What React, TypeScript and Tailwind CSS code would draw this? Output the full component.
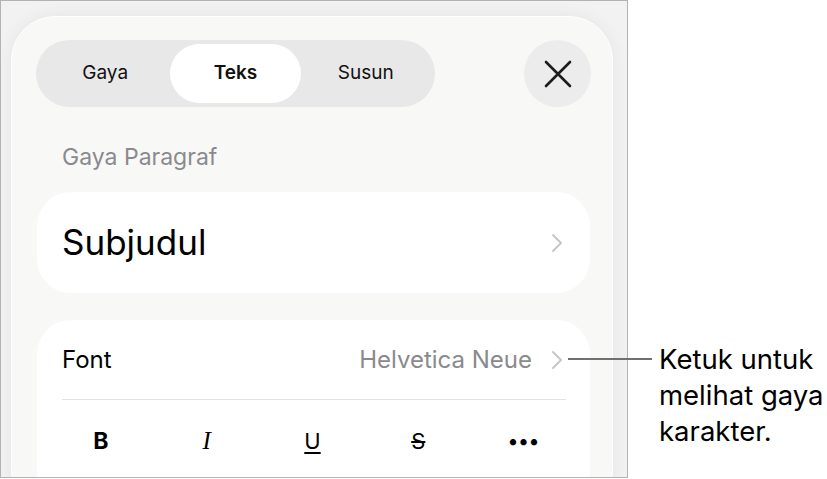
import React from 'react';

const sf = "font-['Inter','Liberation_Sans',sans-serif]";

// Thin disclosure chevron used on the list rows
const Chevron = () => (
    <svg width="12" height="20" viewBox="0 0 12 20" fill="none" className="shrink-0">
        <polyline points="2,2 10,10 2,18" stroke="#c4c4c7" strokeWidth="1.8" strokeLinecap="round" strokeLinejoin="round" />
    </svg>
);

const CloseIcon = () => (
    <svg width="28" height="28" viewBox="0 0 28 28" fill="none">
        <path d="M2 2 L26 26 M26 2 L2 26" stroke="#1c1c1e" strokeWidth="2.6" strokeLinecap="round" />
    </svg>
);

const tabs = ['Gaya', 'Teks', 'Susun'];

const App: React.FC = () => {
    return (
        <div className={`relative w-[827px] h-[479px] bg-white overflow-hidden ${sf}`}>
            {/* Device frame */}
            <div className="w-[628px] h-[478px] border border-[#b3b3b3] bg-[#f2f2f2] overflow-hidden">
                <div className="ml-[10px] mt-[15px] w-[602px] h-[500px] rounded-[44px] border border-white bg-[#f8f8f7] shadow-[0_0_18px_rgba(0,0,0,0.06)] pt-[23px] pl-[24px] pr-[21px]">
                    {/* Tab switcher + close */}
                    <div className="flex items-center justify-between h-[67px]">
                        <div className="flex w-[399px] h-[67px] rounded-full bg-[#e8e8e8] p-[4px]">
                            {tabs.map((t) => (
                                <div
                                    key={t}
                                    className={`flex-1 flex items-center justify-center rounded-full text-[19px] text-[#111] ${
                                        t === 'Teks' ? 'bg-white font-semibold' : ''
                                    }`}
                                >
                                    {t}
                                </div>
                            ))}
                        </div>
                        <div className="w-[67px] h-[67px] rounded-full bg-[#ececec] flex items-center justify-center">
                            <CloseIcon />
                        </div>
                    </div>

                    {/* Paragraph style section */}
                    <div className="pl-[26px] pt-[36px] h-[85px] text-[23px] leading-[28px] text-[#8a8a8e]">
                        Gaya Paragraf
                    </div>

                    <div className="ml-px w-[553px] h-[101px] rounded-[34px] bg-white flex items-center justify-between pl-[25px] pr-[27px]">
                        <span className="text-[35px] text-black">Subjudul</span>
                        <Chevron />
                    </div>

                    {/* Font section */}
                    <div className="ml-px mt-[27px] w-[553px] h-[200px] rounded-[34px] bg-white">
                        <div className="h-[79px] flex items-center pl-[25px] pr-[27px]">
                            <span className="text-[24px] text-black">Font</span>
                            <span className="ml-auto mr-[19px] text-[24px] text-[#8a8a8e]">Helvetica Neue</span>
                            <Chevron />
                        </div>
                        <div className="ml-[25px] mr-[24px] h-px bg-[#e3e3e3]" />
                        <div className="grid grid-cols-5 ml-[11px] w-[529px] h-[82px] items-center justify-items-center text-black">
                            <span className="text-[23px] font-bold">B</span>
                            <span className="text-[25px] italic font-['Liberation_Serif',serif]">I</span>
                            <span className="text-[22px] underline underline-offset-[3px] decoration-[1.5px]">U</span>
                            <span className="text-[22px] line-through decoration-[1.5px]">S</span>
                            <span className="text-[20px] font-bold tracking-[1px]">•••</span>
                        </div>
                    </div>
                </div>
            </div>

            {/* Callout */}
            <div className="absolute left-[568px] top-[358px] w-[84px] h-[2px] bg-[#707070]" />
            <div className="absolute left-[659px] top-[341px] text-[27.5px] leading-[36px] text-black">
                Ketuk untuk
                <br />
                melihat gaya
                <br />
                karakter.
            </div>
        </div>
    );
};

export default App;
